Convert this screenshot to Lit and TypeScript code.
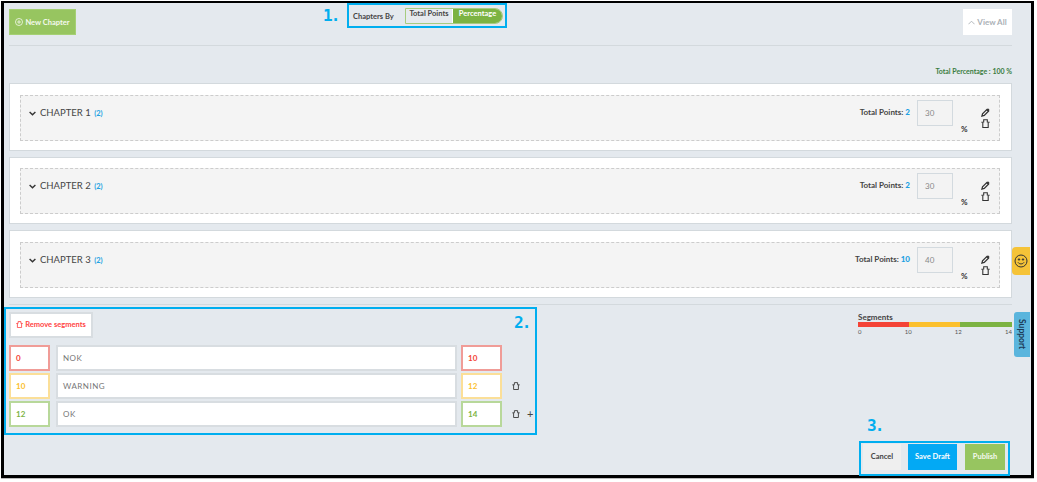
import { LitElement, html, css } from "lit";
import { customElement } from "lit/decorators.js";

const trash = (size = 9) => html`<svg class="ico" width=${size} height=${size} viewBox="0 0 10 10" fill="none" stroke="currentColor" stroke-width="1.2"><path d="M.4 3.6L3 3.4V.8h4v2.6l2.6.2M2 3.6v5.8h6V3.6"/></svg>`;
const pencil = html`<svg class="ico" width="9" height="9" viewBox="0 0 10 10"><path d="M1 9l.7-2.6L6.4 1.7 8.3 3.6 3.6 8.3z" fill="none" stroke="currentColor" stroke-width="1.4"/><path d="M6.4 1.7l1.9 1.9L9.6 2.3 7.7.4z" fill="currentColor"/></svg>`;

const chapters = [
  { name: "CHAPTER 1", count: 2, points: 2, pct: 30 },
  { name: "CHAPTER 2", count: 2, points: 2, pct: 30 },
  { name: "CHAPTER 3", count: 2, points: 10, pct: 40 },
];
const segments = [
  { from: 0, label: "NOK", to: 10, tone: "red" },
  { from: 10, label: "WARNING", to: 12, tone: "amber" },
  { from: 12, label: "OK", to: 14, tone: "green" },
];

@customElement("app-root")
export class AppRoot extends LitElement {
  static styles = css`
    :host { display: block; position: relative; width: 1037px; height: 482px; background: #fff; overflow: hidden;
      font-family: Lato, "Open Sans", sans-serif; color: #333; }
    * { box-sizing: border-box; }
    .frame { margin: 1px 0 0 1px; width: 1033px; height: 477px; border: 3px solid #000; border-top-width: 2px; background: #e4e9ee;
      padding: 6px 19px 0 5px; display: flex; flex-direction: column; box-shadow: 0 1px 0 #bbb; }
    .ico { display: block; }
    .top { display: flex; align-items: flex-start; height: 26px; flex: none; }
    .new { width: 67px; height: 26px; background: #97c560; color: #f4f9ee; font-size: 7.5px; font-weight: 700;
      display: flex; align-items: center; justify-content: center; gap: 2px; border: 1px solid #a5d074; }
    .by { margin-left: 277px; display: flex; align-items: center; font-size: 7.5px; font-weight: 700; color: #444; height: 16px; margin-top: -1px; }
    .by > span { width: 52px; }
    .toggle { display: flex; width: 98px; height: 16px; border: 1px solid #a6cc80; border-radius: 0 8px 8px 0; overflow: hidden; }
    .toggle div { font-size: 7.5px; line-height: 10px; text-align: center; }
    .tl { width: 47px; background: #e6eaee; color: #444; border-right: 1px solid #fff; }
    .tr { flex: 1; background: #7cb342; color: #fff; }
    .all { margin-left: auto; width: 49px; height: 26px; background: #fff; color: #aab0b5; font-size: 8px; font-weight: 700;
      display: flex; align-items: center; justify-content: center; gap: 2px; }
    .rule { border: 0; border-top: 1px solid #d3d9dd; margin: 10px 0 0; flex: none; height: 0; }
    .rule.low { margin-top: 6px; }
    .pct { font-size: 7px; font-weight: 700; color: #3b7d3f; text-align: right; margin: 20px 0 0; height: 17px; line-height: 10px; flex: none; }
    .cards { display: flex; flex-direction: column; gap: 6px; flex: none; }
    .card { height: 67.5px; background: #fff; border: 1px solid #d3d9dd; padding: 10.5px 11px 10px 10px; }
    .inner { height: 46px; background: #f4f4f4; border: 1px dashed #ccc; display: flex; align-items: flex-start; }
    .chev { margin: 15px 0 0 8px; color: #333; }
    .title { font-size: 9.5px; margin: 10px 0 0 4px; line-height: 14px; color: #444; }
    .count { font-size: 7.5px; color: #1da1e2; font-weight: 700; margin-left: 1px; }
    .tp { margin: 10px 0 0 auto; font-size: 8px; font-weight: 700; line-height: 12px; color: #444; }
    .tp b { color: #1da1e2; }
    .val { width: 36px; height: 26px; margin: 4px 0 0 7px; background: #f3f3f3; border: 1px solid #d3dadf; font-size: 8px; color: #888;
      padding: 7px 0 0 7px; line-height: 10px; }
    .sign { font-size: 8px; font-weight: 700; color: #333; width: 28px; padding: 28px 0 0 8px; line-height: 10px; }
    .acts { display: flex; flex-direction: column; gap: 2px; margin: 12px 0 0 0; width: 18px; color: #333; }
    .bottom { display: flex; justify-content: space-between; margin-top: 7px; flex: none; }
    .left { width: 535px; }
    .remove { width: 84px; height: 26px; background: #fff; border: 2px solid #d8dde1; color: #f44; font-size: 7.5px; font-weight: 700;
      display: flex; align-items: center; justify-content: center; gap: 2px; }
    .rows { margin-top: 7px; display: flex; flex-direction: column; gap: 2px; }
    .row { display: flex; height: 26px; align-items: center; }
    .num { width: 41px; height: 26px; background: #fff; border: 2px solid; font-size: 8px; font-weight: 700; line-height: 22px; padding-left: 5px; }
    .num.red { color: #f44336; border-color: #f09c97; }
    .num.amber { color: #fbc02d; border-color: #fbdf98; }
    .num.green { color: #7cb342; border-color: #b8d89a; }
    .lab { width: 401px; height: 26px; margin: 0 4px 0 6px; background: #fff; border: 2px solid #d8dde1; color: #777; font-size: 8px;
      letter-spacing: .5px; line-height: 22px; padding-left: 5px; }
    .tools { display: flex; align-items: center; gap: 7px; margin-left: 10px; color: #444; font-size: 11px; line-height: 10px; }
    .right { width: 154px; padding-top: 1px; }
    .seg { font-size: 8px; font-weight: 700; color: #444; line-height: 9px; }
    .bar { display: flex; height: 5px; }
    .bar i { display: block; }
    .ticks { display: flex; justify-content: space-between; font-size: 6px; color: #555; line-height: 8px; margin-top: 1px; }
    .foot { display: flex; justify-content: flex-end; gap: 7px; margin: 17px 7px 0 0; flex: none; }
    .btn { height: 26px; font-size: 7.5px; font-weight: 700; display: flex; align-items: center; justify-content: center; }
    .cancel { width: 38px; background: #efefef; color: #444; }
    .save { width: 49px; background: #03a9f4; color: #fff; }
    .pub { width: 40px; background: #97c560; color: #f4f9ee; margin-left: 1px; }
    .box { position: absolute; border: 2px solid #00aeef; pointer-events: none; }
    .no { position: absolute; color: #00aeef; font: 700 16px/16px "DejaVu Sans Mono", monospace; letter-spacing: -2px; }
    .smile { position: absolute; left: 1012px; top: 247px; width: 18px; height: 28px; background: #f5c338; border-radius: 4px 0 0 4px;
      display: flex; align-items: center; justify-content: center; color: #333; }
    .support { position: absolute; left: 1014px; top: 312px; width: 16px; height: 45px; background: #5ab5dd; border-radius: 3px 0 0 3px;
      display: flex; align-items: center; justify-content: center; }
    .support span { writing-mode: vertical-rl; font-size: 8.5px; font-weight: 700; color: #1d3c58; }
  `;

  render() {
    return html`
      <div class="frame">
        <div class="top">
          <div class="new">
            <svg width="8" height="8" viewBox="0 0 10 10" fill="none" stroke="currentColor" stroke-width="1"><circle cx="5" cy="5" r="4.4"/><path d="M2.6 5h4.8M5 2.6v4.8"/></svg>
            New Chapter
          </div>
          <div class="by"><span>Chapters By</span>
            <div class="toggle"><div class="tl">Total Points</div><div class="tr">Percentage</div></div>
          </div>
          <div class="all">
            <svg width="7" height="5" viewBox="0 0 8 5" fill="none" stroke="#aab0b5"><path d="M.5 4.5L4 1l3.5 3.5"/></svg>
            View All
          </div>
        </div>
        <hr class="rule" />
        <div class="pct">Total Percentage : 100 %</div>
        <div class="cards">
          ${chapters.map((c) => html`
            <div class="card"><div class="inner">
              <svg class="chev" width="7" height="5" viewBox="0 0 8 5" fill="none" stroke="currentColor" stroke-width="1.6"><path d="M.7.8L4 4l3.3-3.2"/></svg>
              <div class="title">${c.name} <span class="count">(${c.count})</span></div>
              <div class="tp">Total Points: <b>${c.points}</b></div>
              <div class="val">${c.pct}</div>
              <div class="sign">%</div>
              <div class="acts">${pencil}${trash()}</div>
            </div></div>`)}
        </div>
        <hr class="rule low" />
        <div class="bottom">
          <div class="left">
            <div class="remove">${trash(7)} Remove segments</div>
            <div class="rows">
              ${segments.map((s, i) => html`
                <div class="row">
                  <div class="num ${s.tone}">${s.from}</div>
                  <div class="lab">${s.label}</div>
                  <div class="num ${s.tone}">${s.to}</div>
                  <div class="tools">
                    ${i > 0 ? trash(8) : ""}
                    ${i === 2 ? html`<span>+</span>` : ""}
                  </div>
                </div>`)}
            </div>
          </div>
          <div class="right">
            <div class="seg">Segments</div>
            <div class="bar">
              <i style="width:51px;background:#f44336"></i>
              <i style="width:51px;background:#fbc02d"></i>
              <i style="width:52px;background:#7cb342"></i>
            </div>
            <div class="ticks"><span>0</span><span>10</span><span>12</span><span>14</span></div>
          </div>
        </div>
        <div class="foot">
          <div class="btn cancel">Cancel</div>
          <div class="btn save">Save Draft</div>
          <div class="btn pub">Publish</div>
        </div>
      </div>

      <div class="box" style="left:347px;top:3px;width:160px;height:25px"></div>
      <div class="box" style="left:4px;top:307px;width:533px;height:128px"></div>
      <div class="box" style="left:859px;top:441px;width:151px;height:35px"></div>
      <div class="no" style="left:323px;top:8px">1.</div>
      <div class="no" style="left:514px;top:315px">2.</div>
      <div class="no" style="left:867px;top:418px">3.</div>
      <div class="smile">
        <svg width="14" height="14" viewBox="0 0 14 14" fill="none" stroke="currentColor" stroke-width="1"><circle cx="7" cy="7" r="6"/><circle cx="5" cy="5.5" r=".7" fill="currentColor"/><circle cx="9" cy="5.5" r=".7" fill="currentColor"/><path d="M4 8.4c1.4 2 4.6 2 6 0"/></svg>
      </div>
      <div class="support"><span>Support</span></div>
    `;
  }
}
